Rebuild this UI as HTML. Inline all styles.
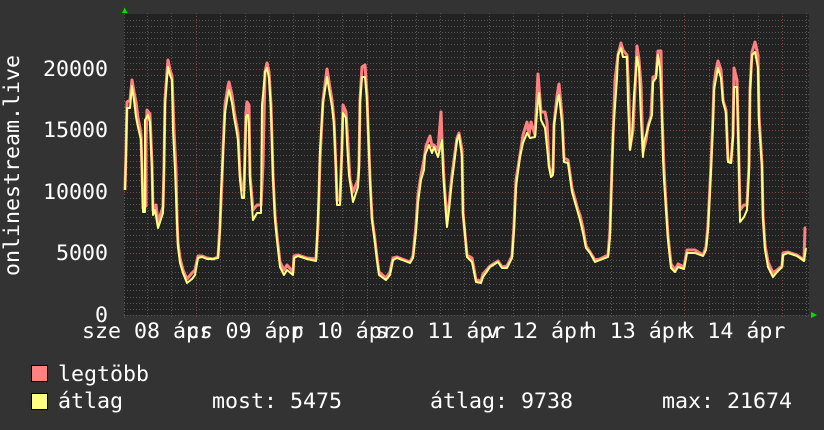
<!DOCTYPE html>
<html><head><meta charset="utf-8"><style>
html,body{margin:0;padding:0;background:#333;width:824px;height:430px;overflow:hidden}
svg{display:block}
text{font-family:"DejaVu Sans Mono","Liberation Mono",monospace;font-size:21.6px;fill:#fff}
</style></head><body>
<svg width="824" height="430" viewBox="0 0 824 430" xmlns="http://www.w3.org/2000/svg">
<rect width="824" height="430" fill="#333"/>
<rect x="124" y="14" width="685" height="301" fill="#222"/>
<g fill="none" stroke-width="1" shape-rendering="crispEdges" stroke-dasharray="1 2">
<path stroke="#555" d="M124 309.5H811M124 303.5H811M124 297.5H811M124 290.5H811M124 284.5H811M124 278.5H811M124 272.5H811M124 266.5H811M124 260.5H811M124 247.5H811M124 241.5H811M124 235.5H811M124 229.5H811M124 223.5H811M124 217.5H811M124 210.5H811M124 204.5H811M124 198.5H811M124 186.5H811M124 180.5H811M124 174.5H811M124 167.5H811M124 161.5H811M124 155.5H811M124 149.5H811M124 143.5H811M124 137.5H811M124 124.5H811M124 118.5H811M124 112.5H811M124 106.5H811M124 100.5H811M124 94.5H811M124 87.5H811M124 81.5H811M124 75.5H811M124 63.5H811M124 57.5H811M124 51.5H811M124 44.5H811M124 38.5H811M124 32.5H811M124 26.5H811M124 20.5H811"/>
<path stroke="#555" d="M147.5 13V318M171.5 13V318M220.5 13V318M245.5 13V318M269.5 13V318M318.5 13V318M342.5 13V318M367.5 13V318M416.5 13V318M440.5 13V318M464.5 13V318M513.5 13V318M538.5 13V318M562.5 13V318M611.5 13V318M635.5 13V318M660.5 13V318M709.5 13V318M733.5 13V318M758.5 13V318M806.5 13V318"/>
<path stroke="#7d4545" d="M124 253.5H811M124 192.5H811M124 130.5H811M124 69.5H811M196.5 13V318M293.5 13V318M391.5 13V318M489.5 13V318M587.5 13V318M684.5 13V318M782.5 13V318"/>
<path stroke="#555" d="M124 315.5H811M124.5 14V318"/>
</g>
<polyline fill="none" stroke="#ff8080" stroke-width="3" stroke-linejoin="round" points="125,190 126,150 127,102 130,100 132,80 134,92 136,102 138,118 140,128 141,135 142,170 143,208 146,206 146,140 147,110 150,114 152,165 153,210 156,205 158,222 163,207 164,165 165,100 167,72 168,60 170,70 172,76 174,130 176,170 177,218 178,243 180,258 183,270 187,279 192,273 195,270 198,256 202,256 207,258 213,259 218,257 220,225 222,180 223,150 225,105 228,86 229,82 232,95 234,110 236,122 238,133 240,175 242,190 244,190 245,150 246,112 247,102 249,105 250,175 253,210 257,205 261,205 263,165 265,72 267,63 269,72 271,105 273,175 275,215 277,236 280,262 284,270 287,265 293,272 294,256 298,255 307,258 316,259 318,225 320,160 323,100 327,69 330,88 332,100 334,120 336,170 337,200 340,200 342,145 343,105 346,112 348,145 350,180 353,192 358,180 359,165 360,100 362,67 365,65 367,95 368,125 370,178 372,218 375,240 377,258 379,272 386,278 390,272 393,258 397,257 410,262 413,256 416,225 418,195 421,175 424,160 426,146 430,136 432,146 434,145 438,150 441,112 442,140 444,180 447,222 449,205 452,175 454,160 457,138 459,133 462,150 463,213 467,255 472,258 476,280 481,281 483,274 490,266 498,261 502,267 507,266 512,256 514,225 516,180 520,155 523,135 527,122 529,135 531,122 535,135 538,74 541,112 545,112 547,122 549,165 551,174 553,172 554,125 557,96 559,84 562,115 564,158 568,160 572,188 578,210 580,215 583,228 586,246 590,252 595,260 600,259 608,255 610,230 612,165 614,110 615,80 618,55 621,43 623,50 627,55 629,100 630,148 633,130 635,90 637,46 639,60 641,85 642,120 643,152 646,140 648,126 651,116 653,77 656,76 658,51 661,51 662,115 664,168 666,205 668,236 671,264 675,270 678,264 684,267 687,250 695,250 703,255 706,247 708,225 711,165 713,115 714,85 716,70 718,61 721,70 723,100 726,110 728,160 731,162 733,135 734,68 737,80 739,165 740,210 744,205 747,205 749,165 750,90 752,52 755,42 758,55 759,115 762,165 763,215 765,245 768,262 773,273 777,270 782,266 783,253 788,252 797,255 804,260 805,228 806,228"/>
<polyline fill="none" stroke="#ffff80" stroke-width="2" stroke-linejoin="round" points="125,190 126,155 127,108 130,108 132,86 134,100 136,117 138,127 141,140 142,170 143,212 145,212 145,120 148,115 150,122 152,170 153,215 155,210 158,228 163,213 164,170 165,105 167,78 168,67 170,75 172,80 173,130 175,170 177,222 178,247 180,263 183,273 187,283 192,279 195,275 198,258 202,257 207,259 213,259 218,258 220,230 221,192 223,155 225,113 228,94 229,90 232,103 234,117 236,128 238,140 239,160 240,180 242,198 244,198 245,160 246,117 247,115 248,115 249,125 250,180 253,220 257,213 261,213 262,105 263,95 265,72 267,68 269,78 271,110 273,177 275,220 277,240 280,267 284,275 287,270 293,275 294,258 298,256 307,259 316,261 317,240 319,192 320,150 323,103 327,77 330,95 332,107 334,125 336,170 337,205 340,205 342,150 343,113 346,118 347,143 349,175 353,202 358,187 359,170 360,103 362,77 365,77 367,100 368,127 370,180 372,220 375,243 377,260 379,275 386,280 390,275 393,260 397,258 410,263 413,258 416,232 418,203 421,180 424,170 425,155 429,145 432,153 434,147 438,157 442,140 443,170 445,200 447,227 449,210 452,180 454,165 457,140 459,135 462,157 463,213 467,257 472,262 476,282 481,283 483,277 490,267 498,262 502,268 507,268 512,258 514,230 516,187 520,157 523,143 527,133 530,138 535,137 538,100 539,93 541,120 545,128 547,147 549,167 551,177 553,175 554,125 558,97 559,95 562,123 564,162 568,163 572,192 578,213 580,220 583,233 586,248 590,253 595,262 600,260 608,257 610,237 612,170 613,135 617,78 618,55 621,48 623,57 627,57 628,102 630,150 632,135 634,95 637,57 639,68 641,120 643,157 644,142 648,128 652,115 653,82 656,78 658,55 660,68 662,115 663,158 664,180 666,208 668,240 671,268 675,272 678,267 684,269 687,253 695,253 703,256 706,250 708,230 711,170 713,125 714,90 718,68 721,78 723,102 726,113 727,137 728,162 731,163 733,137 734,87 737,87 739,167 740,222 744,217 747,210 749,170 750,93 752,55 755,52 758,68 759,122 762,167 763,218 765,250 768,267 773,277 777,272 782,267 783,255 788,253 797,256 804,261 806,248"/>
<polygon points="122,13 127.5,13 124.7,7.5" fill="#00e000"/>
<polygon points="811,312 811,318 817,315" fill="#00e000"/>
<g text-anchor="end">
<text x="108" y="76">20000</text>
<text x="108" y="137">15000</text>
<text x="108" y="199">10000</text>
<text x="108" y="260">5000</text>
<text x="108" y="322">0</text>
</g>
<text transform="translate(19,165.5) rotate(-90)" text-anchor="middle">onlinestream.live</text>
<g text-anchor="middle">
<text x="147" y="338">sze 08 ápr</text>
<text x="245" y="338">cs 09 ápr</text>
<text x="342.7" y="338">p 10 ápr</text>
<text x="440.4" y="338">szo 11 ápr</text>
<text x="538" y="338">v 12 ápr</text>
<text x="635.7" y="338">h 13 ápr</text>
<text x="733.4" y="338">k 14 ápr</text>
</g>
<rect x="31.5" y="365.5" width="16" height="16" fill="#ff8080" stroke="#000"/>
<rect x="31.5" y="393.5" width="16" height="16" fill="#ffff80" stroke="#000"/>
<text x="58" y="381">legtöbb</text>
<text x="58" y="408">átlag</text>
<text x="212" y="408">most: 5475</text>
<text x="430" y="408">átlag: 9738</text>
<text x="662" y="408">max: 21674</text>
</svg>
</body></html>
